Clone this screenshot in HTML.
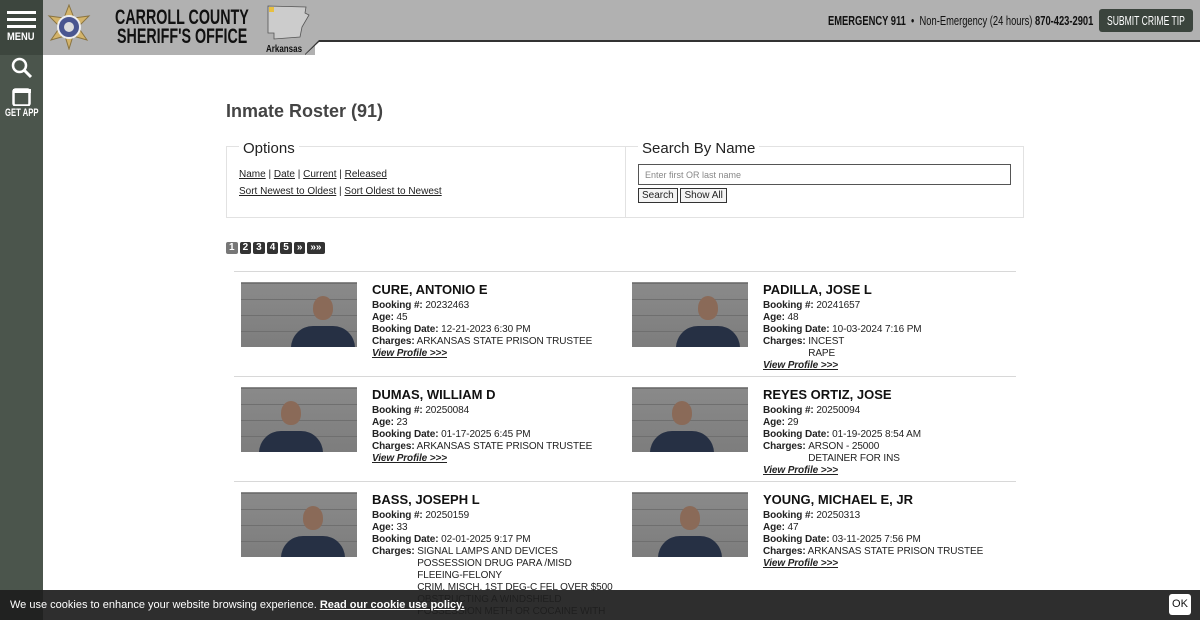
<!DOCTYPE html>
<html><head><meta charset="utf-8"><style>
*{margin:0;padding:0;box-sizing:border-box}
body{width:1200px;height:620px;overflow:hidden;background:#fff;font-family:"Liberation Sans",sans-serif;color:#222;position:relative}
.sq{display:inline-block;white-space:nowrap;transform-origin:0 0}
#side{position:absolute;left:0;top:0;width:43px;height:620px;background:#4b554c}
#menu{position:absolute;left:0;top:0;width:43px;height:55px;background:#3d463e;color:#fff}
.bar{position:absolute;left:7px;width:29px;height:3px;background:#fff}
#hdr{position:absolute;left:43px;top:0;width:1157px;height:42px;background:#b1b1b1;border-bottom:2px solid #333}
#hl{position:absolute;left:43px;top:0;width:272px;height:55px;background:#b1b1b1}
.card{position:absolute;width:390px}
.ph{position:absolute;width:116px;height:65px;background:linear-gradient(#8a8a8a,#7d7d7d);overflow:hidden}
.ph:before{content:"";position:absolute;inset:0;background:repeating-linear-gradient(0deg,transparent 0 15px,#6f6f6f 15px 16px)}
.ph .hd{position:absolute;width:20px;height:24px;border-radius:50% 50% 45% 45%;background:#8a6a58;top:14px}
.ph .bd{position:absolute;width:64px;height:24px;border-radius:22px 22px 0 0;background:#263044;top:44px}
.tx{position:absolute;left:131px;top:0;font-size:10px;line-height:12px;letter-spacing:-0.1px;white-space:nowrap}
.tx h3{font-size:13px;line-height:16px;margin-bottom:2px;color:#111;letter-spacing:0}
.tx b{color:#222}
.tx a{font-weight:bold;font-style:italic;text-decoration:underline;color:#222}
.ch{display:flex}.ch span{display:block}
.hr{position:absolute;left:234px;width:782px;height:1px;background:#d8d8d8}
.pg{display:inline-block;background:#333;color:#fff;font-size:10px;font-weight:bold;padding:0 3px;height:12px;line-height:12px;border-radius:2px;margin-right:2px}
</style></head><body>
<div id="hdr"></div><div id="hl"></div>
<svg style="position:absolute;left:305px;top:40px" width="22" height="16"><polygon points="0,15 14,2 22,2 22,0 13,0 0,13" fill="#333"/><polygon points="0,0 14,0 0,14" fill="#b1b1b1"/></svg>
<div id="side"></div>
<div id="menu"><div class="bar" style="top:11px"></div><div class="bar" style="top:18px"></div><div class="bar" style="top:25px"></div><div class="sq" style="position:absolute;top:31px;left:7px;font-size:11px;font-weight:bold;transform:scaleX(0.85)">MENU</div></div>
<svg style="position:absolute;left:11px;top:57px" width="22" height="22"><circle cx="8.5" cy="8.5" r="6.5" stroke="#fff" stroke-width="2.5" fill="none"/><line x1="13" y1="13" x2="20" y2="20" stroke="#fff" stroke-width="3"/></svg>
<svg style="position:absolute;left:12px;top:88px" width="20" height="18"><rect x="1.5" y="1.5" width="16" height="16" rx="2" stroke="#fff" stroke-width="2.5" fill="none"/><rect x="1" y="1" width="18" height="4" fill="#fff"/></svg>
<div class="sq" style="position:absolute;left:5px;top:107px;color:#fff;font-size:11px;font-weight:bold;transform:scaleX(0.7)">GET APP</div>
<svg style="position:absolute;left:46px;top:4px" width="46" height="46"><polygon points="23,1 28,14 43,12 32,23 41,36 27,32 23,45 19,32 5,36 14,23 3,12 18,14" fill="#d4b46a" stroke="#8a7440"/><circle cx="23" cy="23" r="11" fill="#4a5690" stroke="#eee" stroke-width="2"/><circle cx="23" cy="23" r="5" fill="#ddd"/></svg>
<div class="sq" style="position:absolute;left:115px;top:8px;font-size:21px;font-weight:bold;line-height:20px;color:#111;transform:scaleX(0.68)">CARROLL COUNTY</div>
<div class="sq" style="position:absolute;left:117px;top:27px;font-size:21px;font-weight:bold;line-height:20px;color:#111;transform:scaleX(0.68)">SHERIFF'S OFFICE</div>
<svg style="position:absolute;left:266px;top:5px" width="44" height="40"><path d="M2,1 L40,2 L39,8 L43,10 L36,22 L34,32 L8,34 L8,28 L2,28 Z" fill="#ccc" stroke="#555" stroke-width="0.8"/><rect x="3" y="2" width="5" height="5" fill="#e8c040"/></svg>
<div class="sq" style="position:absolute;left:266px;top:44px;font-size:10px;font-weight:bold;color:#111;transform:scaleX(0.8)">Arkansas</div>
<div class="sq" style="position:absolute;left:828px;top:13px;font-size:13px;color:#111;transform:scaleX(0.72)"><b>EMERGENCY 911</b> &nbsp;•&nbsp; Non-Emergency (24 hours) <b>870-423-2901</b></div>
<div style="position:absolute;left:1099px;top:9px;width:94px;height:23px;background:#3b443d;border-radius:3px"></div>
<div class="sq" style="position:absolute;left:1107px;top:13px;font-size:13px;color:#fff;transform:scaleX(0.66)">SUBMIT CRIME TIP</div>

<div style="position:absolute;left:226px;top:101px;font-size:18px;font-weight:bold;color:#444">Inmate Roster (91)</div>
<div style="position:absolute;left:226px;top:146px;width:798px;height:72px;border:1px solid #e2e2e2"></div>
<div style="position:absolute;left:625px;top:146px;width:1px;height:72px;background:#e2e2e2"></div>
<div style="position:absolute;left:239px;top:140px;background:#fff;padding:0 4px;font-size:15px;color:#222">Options</div>
<div style="position:absolute;left:239px;top:166px;font-size:10px;line-height:17px;color:#222"><u>Name</u> | <u>Date</u> | <u>Current</u> | <u>Released</u><br><u>Sort Newest to Oldest</u> | <u>Sort Oldest to Newest</u></div>
<div style="position:absolute;left:638px;top:140px;background:#fff;padding:0 4px;font-size:15px;color:#222">Search By Name</div>
<div style="position:absolute;left:638px;top:164px;width:373px;height:21px;border:1px solid #555;font-size:9px;color:#888;padding:5px 6px">Enter first OR last name</div>
<div style="position:absolute;left:638px;top:188px;font-size:10px"><span style="border:1px solid #333;padding:1px 3px;display:inline-block;background:#f4f4f4">Search</span> <span style="border:1px solid #333;padding:1px 3px;display:inline-block;background:#f4f4f4">Show All</span></div>
<div style="position:absolute;left:226px;top:237px"><span class="pg" style="background:#777">1</span><span class="pg">2</span><span class="pg">3</span><span class="pg">4</span><span class="pg">5</span><span class="pg">»</span><span class="pg">»»</span></div>

<div class="hr" style="top:271px"></div><div class="hr" style="top:376px"></div><div class="hr" style="top:481px"></div>

<div class="card" style="left:241px;top:282px"><div class="ph"><div class="hd" style="left:72px"></div><div class="bd" style="left:50px"></div></div><div class="tx"><h3>CURE, ANTONIO E</h3><b>Booking #:</b> 20232463<br><b>Age:</b> 45<br><b>Booking Date:</b> 12-21-2023 6:30 PM<br><b>Charges:</b> ARKANSAS STATE PRISON TRUSTEE<br><a>View Profile &gt;&gt;&gt;</a></div></div>
<div class="card" style="left:632px;top:282px"><div class="ph"><div class="hd" style="left:66px"></div><div class="bd" style="left:44px"></div></div><div class="tx"><h3>PADILLA, JOSE L</h3><b>Booking #:</b> 20241657<br><b>Age:</b> 48<br><b>Booking Date:</b> 10-03-2024 7:16 PM<br><div class="ch"><b>Charges:&nbsp;</b><span>INCEST<br>RAPE</span></div><a>View Profile &gt;&gt;&gt;</a></div></div>
<div class="card" style="left:241px;top:387px"><div class="ph"><div class="hd" style="left:40px"></div><div class="bd" style="left:18px"></div></div><div class="tx"><h3>DUMAS, WILLIAM D</h3><b>Booking #:</b> 20250084<br><b>Age:</b> 23<br><b>Booking Date:</b> 01-17-2025 6:45 PM<br><b>Charges:</b> ARKANSAS STATE PRISON TRUSTEE<br><a>View Profile &gt;&gt;&gt;</a></div></div>
<div class="card" style="left:632px;top:387px"><div class="ph"><div class="hd" style="left:40px"></div><div class="bd" style="left:18px"></div></div><div class="tx"><h3>REYES ORTIZ, JOSE</h3><b>Booking #:</b> 20250094<br><b>Age:</b> 29<br><b>Booking Date:</b> 01-19-2025 8:54 AM<br><div class="ch"><b>Charges:&nbsp;</b><span>ARSON - 25000<br>DETAINER FOR INS</span></div><a>View Profile &gt;&gt;&gt;</a></div></div>
<div class="card" style="left:241px;top:492px"><div class="ph"><div class="hd" style="left:62px"></div><div class="bd" style="left:40px"></div></div><div class="tx"><h3>BASS, JOSEPH L</h3><b>Booking #:</b> 20250159<br><b>Age:</b> 33<br><b>Booking Date:</b> 02-01-2025 9:17 PM<br><div class="ch"><b>Charges:&nbsp;</b><span>SIGNAL LAMPS AND DEVICES<br>POSSESSION DRUG PARA /MISD<br>FLEEING-FELONY<br>CRIM. MISCH. 1ST DEG-C FEL OVER $500<br>OBSTRUCTING A WINDSHIELD<br>POSSESSION METH OR COCAINE WITH</span></div></div></div>
<div class="card" style="left:632px;top:492px"><div class="ph"><div class="hd" style="left:48px"></div><div class="bd" style="left:26px"></div></div><div class="tx"><h3>YOUNG, MICHAEL E, JR</h3><b>Booking #:</b> 20250313<br><b>Age:</b> 47<br><b>Booking Date:</b> 03-11-2025 7:56 PM<br><b>Charges:</b> ARKANSAS STATE PRISON TRUSTEE<br><a>View Profile &gt;&gt;&gt;</a></div></div>

<div style="position:absolute;left:0;top:590px;width:1200px;height:30px;background:rgba(30,30,30,.93);color:#fff;font-size:11px;line-height:30px;padding-left:10px">We use cookies to enhance your website browsing experience. <b><u>Read our cookie use policy.</u></b></div>
<div style="position:absolute;left:1169px;top:594px;width:22px;height:21px;background:#fff;border-radius:3px;font-size:11px;line-height:21px;text-align:center;color:#111">OK</div>
</body></html>
